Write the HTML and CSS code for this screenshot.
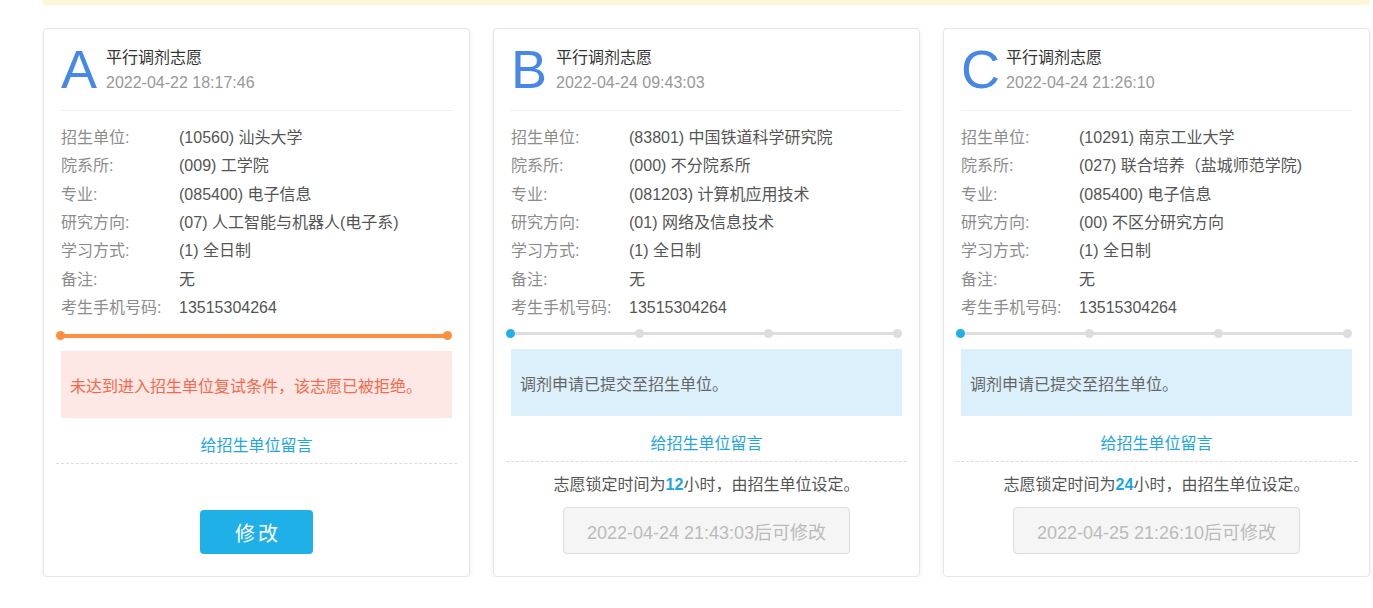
FILE: index.html
```html
<!DOCTYPE html>
<html lang="zh-CN">
<head>
<meta charset="utf-8">
<title>调剂志愿</title>
<link rel="stylesheet" href="styles.css">
</head>
<body>
<div class="page">
  <div class="notice-bar"></div>
  <div class="cards">
    <div class="card">
      <div class="card-head">
        <div class="letter">A</div>
        <div class="head-text">
          <div class="title">平行调剂志愿</div>
          <div class="date">2022-04-22 18:17:46</div>
        </div>
      </div>
      <div class="info">
        <div class="row"><span class="label">招生单位:</span><span class="value">(10560) 汕头大学</span></div>
        <div class="row"><span class="label">院系所:</span><span class="value">(009) 工学院</span></div>
        <div class="row"><span class="label">专业:</span><span class="value">(085400) 电子信息</span></div>
        <div class="row"><span class="label">研究方向:</span><span class="value">(07) 人工智能与机器人(电子系)</span></div>
        <div class="row"><span class="label">学习方式:</span><span class="value">(1) 全日制</span></div>
        <div class="row"><span class="label">备注:</span><span class="value">无</span></div>
        <div class="row"><span class="label">考生手机号码:</span><span class="value">13515304264</span></div>
      </div>
      <div class="progress progress-done">
        <span class="dot"></span><span class="dot"></span>
      </div>
      <div class="alert alert-error">未达到进入招生单位复试条件，该志愿已被拒绝。</div>
      <div class="message-link"><a href="#">给招生单位留言</a></div>
      <div class="card-foot card-foot-edit">
        <button class="btn-edit">修改</button>
      </div>
    </div>

    <div class="card">
      <div class="card-head">
        <div class="letter">B</div>
        <div class="head-text">
          <div class="title">平行调剂志愿</div>
          <div class="date">2022-04-24 09:43:03</div>
        </div>
      </div>
      <div class="info">
        <div class="row"><span class="label">招生单位:</span><span class="value">(83801) 中国铁道科学研究院</span></div>
        <div class="row"><span class="label">院系所:</span><span class="value">(000) 不分院系所</span></div>
        <div class="row"><span class="label">专业:</span><span class="value">(081203) 计算机应用技术</span></div>
        <div class="row"><span class="label">研究方向:</span><span class="value">(01) 网络及信息技术</span></div>
        <div class="row"><span class="label">学习方式:</span><span class="value">(1) 全日制</span></div>
        <div class="row"><span class="label">备注:</span><span class="value">无</span></div>
        <div class="row"><span class="label">考生手机号码:</span><span class="value">13515304264</span></div>
      </div>
      <div class="progress">
        <span class="dot dot-active"></span><span class="dot"></span><span class="dot"></span><span class="dot"></span>
      </div>
      <div class="alert alert-info">调剂申请已提交至招生单位。</div>
      <div class="message-link"><a href="#">给招生单位留言</a></div>
      <div class="card-foot">
        <p class="lock-note">志愿锁定时间为<b>12</b>小时，由招生单位设定。</p>
        <button class="btn-disabled" disabled>2022-04-24 21:43:03后可修改</button>
      </div>
    </div>

    <div class="card">
      <div class="card-head">
        <div class="letter">C</div>
        <div class="head-text">
          <div class="title">平行调剂志愿</div>
          <div class="date">2022-04-24 21:26:10</div>
        </div>
      </div>
      <div class="info">
        <div class="row"><span class="label">招生单位:</span><span class="value">(10291) 南京工业大学</span></div>
        <div class="row"><span class="label">院系所:</span><span class="value">(027) 联合培养（盐城师范学院)</span></div>
        <div class="row"><span class="label">专业:</span><span class="value">(085400) 电子信息</span></div>
        <div class="row"><span class="label">研究方向:</span><span class="value">(00) 不区分研究方向</span></div>
        <div class="row"><span class="label">学习方式:</span><span class="value">(1) 全日制</span></div>
        <div class="row"><span class="label">备注:</span><span class="value">无</span></div>
        <div class="row"><span class="label">考生手机号码:</span><span class="value">13515304264</span></div>
      </div>
      <div class="progress">
        <span class="dot dot-active"></span><span class="dot"></span><span class="dot"></span><span class="dot"></span>
      </div>
      <div class="alert alert-info">调剂申请已提交至招生单位。</div>
      <div class="message-link"><a href="#">给招生单位留言</a></div>
      <div class="card-foot">
        <p class="lock-note">志愿锁定时间为<b>24</b>小时，由招生单位设定。</p>
        <button class="btn-disabled" disabled>2022-04-25 21:26:10后可修改</button>
      </div>
    </div>
  </div>
</div>
</body>
</html>
```

FILE: styles.css
```css
* { box-sizing: border-box; }

html, body {
  margin: 0;
  padding: 0;
  background: #fff;
  font-family: "Liberation Sans", "Noto Sans CJK SC", sans-serif;
  font-size: 16px;
  color: #555;
}

.page {
  width: 1327px;
  margin-left: 43px;
}

.notice-bar {
  height: 5px;
  background: #fdf7d9;
}

.cards {
  display: flex;
  gap: 23px;
  margin-top: 23px;
}

.card {
  width: 427px;
  border: 1px solid #e6e6e6;
  border-radius: 4px;
  box-shadow: 0 2px 5px rgba(0, 0, 0, 0.07);
  padding: 13px 17px 22px;
  display: flex;
  flex-direction: column;
}

.card-head {
  display: flex;
  align-items: flex-start;
  padding-bottom: 14px;
  border-bottom: 1px solid #eeeeee;
}

.letter {
  font-family: "Liberation Sans", sans-serif;
  font-size: 54px;
  line-height: 54px;
  color: #4787e6;
  width: 45px;
}

.head-text {
  padding-top: 6px;
}

.title {
  font-size: 16px;
  line-height: 20px;
  color: #333;
}

.date {
  margin-top: 3px;
  font-size: 16px;
  line-height: 24px;
  color: #999;
}

.info {
  margin-top: 13px;
}

.row {
  display: flex;
  line-height: 28.33px;
  height: 28.33px;
  white-space: nowrap;
}

.label {
  width: 118px;
  color: #8c8c8c;
  flex-shrink: 0;
}

.value {
  color: #555;
}

.progress {
  display: flex;
  justify-content: space-between;
  align-items: center;
  height: 9px;
  margin: 7px 0 0 -5px;
  background: linear-gradient(#dddddd, #dddddd) center / calc(100% - 8px) 3px no-repeat;
}

.progress-done {
  margin-top: 9px;
  background-image: linear-gradient(#fd8f3f, #fd8f3f);
  background-size: calc(100% - 8px) 4px;
}

.dot {
  width: 9px;
  height: 9px;
  border-radius: 50%;
  background: #dddddd;
}

.dot-active { background: #1fb0ea; }

.progress-done .dot { background: #fd8f3f; }

.alert {
  margin-top: 11px;
  height: 67px;
  display: flex;
  align-items: center;
  padding: 0 9px;
  font-size: 16px;
}

.alert-error {
  background: #fee8e6;
  color: #f5684a;
}

.alert-info {
  background: #dbf0fb;
  color: #666;
}

.message-link {
  margin: 0 -5px;
  padding: 18px 0 7px;
  line-height: 20px;
  text-align: center;
  border-bottom: 1px dashed #dddddd;
}

.message-link a {
  color: #1ea5e6;
  text-decoration: none;
}

.card-foot {
  display: flex;
  flex-direction: column;
  align-items: center;
}

.card-foot-edit {
  padding-top: 46px;
}

.lock-note {
  margin: 13px 0 0;
  line-height: 20px;
  color: #555;
}

.lock-note b {
  color: #1ea5e6;
}

.btn-edit {
  width: 113px;
  height: 44px;
  border: none;
  border-radius: 4px;
  background: #20b0e8;
  color: #fff;
  font-family: "Liberation Sans", "Noto Sans CJK SC", sans-serif;
  font-size: 20px;
  letter-spacing: 3px;
  text-indent: 3px;
  cursor: pointer;
}

.btn-disabled {
  margin-top: 12px;
  width: 287px;
  height: 47px;
  border: 1px solid #dddddd;
  border-radius: 4px;
  background: #f5f5f5;
  color: #bbbbbb;
  font-family: "Liberation Sans", "Noto Sans CJK SC", sans-serif;
  font-size: 18px;
}
```
